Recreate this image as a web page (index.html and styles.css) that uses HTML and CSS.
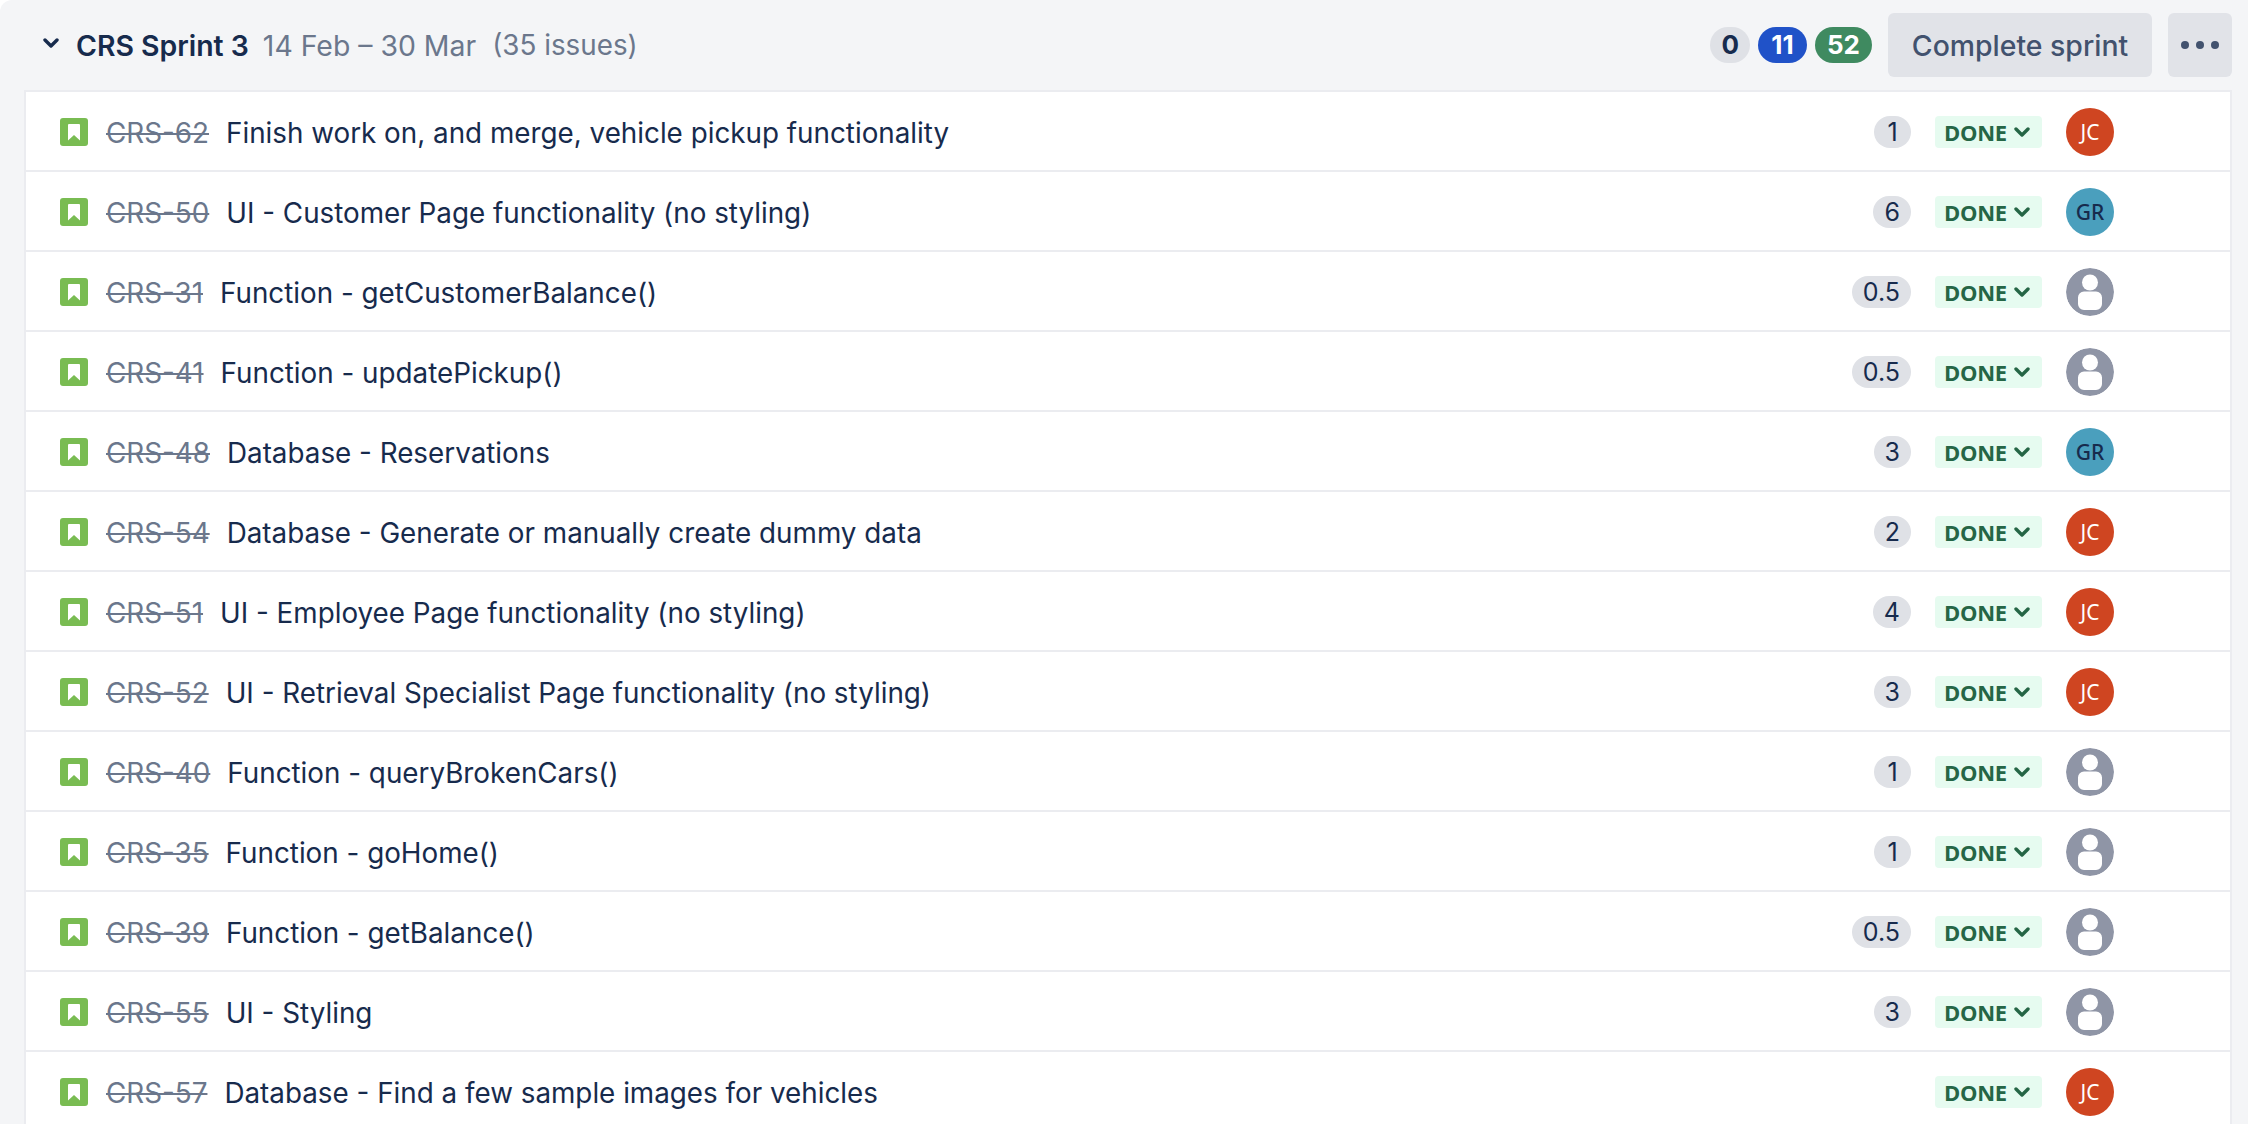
FILE: index.html

```html
<html>
<head>
<title>CRS Sprint 3</title>
<link rel="stylesheet" href="styles.css">
</head>
<body>

<svg class="defs" width="0" height="0">
  <symbol id="story" viewBox="0 0 28 28">
    <rect width="28" height="28" rx="3" fill="#79bc52"/>
    <path d="M9 6h10a1 1 0 0 1 1 1V22.500l-6-5.500-6 5.500V7a1 1 0 0 1 1-1z" fill="#fff"/>
  </symbol>
  <symbol id="caret" viewBox="0 0 16 12">
    <path d="M2 3l6 6 6-6" fill="none" stroke="currentColor" stroke-width="3.400" stroke-linecap="round" stroke-linejoin="round"/>
  </symbol>
  <symbol id="person" viewBox="0 0 48 48">
    <circle cx="24" cy="24" r="24" fill="#8f95a6"/>
    <circle cx="24" cy="14.500" r="8" fill="#fff"/>
    <path d="M18 23.500h12a6 6 0 0 1 6 6v6.500a6 6 0 0 1-6 6H18a6 6 0 0 1-6-6v-6.500a6 6 0 0 1 6-6z" fill="#fff"/>
  </symbol>
</svg>

<div class="sprint">
  <div class="sprint-head">
    <svg class="toggle"><use href="#caret"/></svg>
    <span class="sprint-name">CRS Sprint 3</span>
    <span class="sprint-meta">14 Feb – 30 Mar</span>
    <span class="sprint-count">(35 issues)</span>
    <div class="sprint-actions">
      <div class="totals">
        <span class="total total-todo">0</span>
        <span class="total total-progress">11</span>
        <span class="total total-done">52</span>
      </div>
      <button class="btn btn-complete">Complete sprint</button>
      <button class="btn btn-more"><i></i><i></i><i></i></button>
    </div>
  </div>

  <div class="issues">
    <div class="issue">
      <svg class="type"><use href="#story"/></svg>
      <span class="key">CRS-62</span>
      <span class="summary">Finish work on, and merge, vehicle pickup functionality</span>
      <span class="estimate">1</span>
      <span class="status">DONE <svg><use href="#caret"/></svg></span>
      <span class="avatar avatar-jc">JC</span>
    </div>
    <div class="issue">
      <svg class="type"><use href="#story"/></svg>
      <span class="key">CRS-50</span>
      <span class="summary">UI - Customer Page functionality (no styling)</span>
      <span class="estimate">6</span>
      <span class="status">DONE <svg><use href="#caret"/></svg></span>
      <span class="avatar avatar-gr">GR</span>
    </div>
    <div class="issue">
      <svg class="type"><use href="#story"/></svg>
      <span class="key">CRS-31</span>
      <span class="summary">Function - getCustomerBalance()</span>
      <span class="estimate">0.5</span>
      <span class="status">DONE <svg><use href="#caret"/></svg></span>
      <svg class="avatar"><use href="#person"/></svg>
    </div>
    <div class="issue">
      <svg class="type"><use href="#story"/></svg>
      <span class="key">CRS-41</span>
      <span class="summary">Function - updatePickup()</span>
      <span class="estimate">0.5</span>
      <span class="status">DONE <svg><use href="#caret"/></svg></span>
      <svg class="avatar"><use href="#person"/></svg>
    </div>
    <div class="issue">
      <svg class="type"><use href="#story"/></svg>
      <span class="key">CRS-48</span>
      <span class="summary">Database - Reservations</span>
      <span class="estimate">3</span>
      <span class="status">DONE <svg><use href="#caret"/></svg></span>
      <span class="avatar avatar-gr">GR</span>
    </div>
    <div class="issue">
      <svg class="type"><use href="#story"/></svg>
      <span class="key">CRS-54</span>
      <span class="summary">Database - Generate or manually create dummy data</span>
      <span class="estimate">2</span>
      <span class="status">DONE <svg><use href="#caret"/></svg></span>
      <span class="avatar avatar-jc">JC</span>
    </div>
    <div class="issue">
      <svg class="type"><use href="#story"/></svg>
      <span class="key">CRS-51</span>
      <span class="summary">UI - Employee Page functionality (no styling)</span>
      <span class="estimate">4</span>
      <span class="status">DONE <svg><use href="#caret"/></svg></span>
      <span class="avatar avatar-jc">JC</span>
    </div>
    <div class="issue">
      <svg class="type"><use href="#story"/></svg>
      <span class="key">CRS-52</span>
      <span class="summary">UI - Retrieval Specialist Page functionality (no styling)</span>
      <span class="estimate">3</span>
      <span class="status">DONE <svg><use href="#caret"/></svg></span>
      <span class="avatar avatar-jc">JC</span>
    </div>
    <div class="issue">
      <svg class="type"><use href="#story"/></svg>
      <span class="key">CRS-40</span>
      <span class="summary">Function - queryBrokenCars()</span>
      <span class="estimate">1</span>
      <span class="status">DONE <svg><use href="#caret"/></svg></span>
      <svg class="avatar"><use href="#person"/></svg>
    </div>
    <div class="issue">
      <svg class="type"><use href="#story"/></svg>
      <span class="key">CRS-35</span>
      <span class="summary">Function - goHome()</span>
      <span class="estimate">1</span>
      <span class="status">DONE <svg><use href="#caret"/></svg></span>
      <svg class="avatar"><use href="#person"/></svg>
    </div>
    <div class="issue">
      <svg class="type"><use href="#story"/></svg>
      <span class="key">CRS-39</span>
      <span class="summary">Function - getBalance()</span>
      <span class="estimate">0.5</span>
      <span class="status">DONE <svg><use href="#caret"/></svg></span>
      <svg class="avatar"><use href="#person"/></svg>
    </div>
    <div class="issue">
      <svg class="type"><use href="#story"/></svg>
      <span class="key">CRS-55</span>
      <span class="summary">UI - Styling</span>
      <span class="estimate">3</span>
      <span class="status">DONE <svg><use href="#caret"/></svg></span>
      <svg class="avatar"><use href="#person"/></svg>
    </div>
    <div class="issue">
      <svg class="type"><use href="#story"/></svg>
      <span class="key">CRS-57</span>
      <span class="summary">Database - Find a few sample images for vehicles</span>
      <span class="status">DONE <svg><use href="#caret"/></svg></span>
      <span class="avatar avatar-jc">JC</span>
    </div>
  </div>
</div>

</body>
</html>
```

FILE: styles.css

```css
html, body {
  margin: 0;
  height: 100%;
  overflow: hidden;
  background-color: #fff;
}

body {
  font-family: Inter, "Liberation Sans", sans-serif;
  color: #172b4d;
}

.defs {
  display: block;
}

.sprint {
  height: 1124px;
  padding: 0 16px 0 24px;
  box-sizing: border-box;
  background-color: #f4f5f7;
  border-top-left-radius: 12px;
  overflow: hidden;
}

.sprint-head {
  display: flex;
  align-items: center;
  height: 90px;
  font-size: 28.400px;
}

.toggle {
  width: 16px;
  height: 12px;
  margin: -4px 17px 0 19px;
}

.sprint-name {
  font-weight: 600;
  margin-right: 14px;
}

.sprint-meta,
.sprint-count {
  color: #6b778c;
  margin-right: 16px;
}

.sprint-count {
  font-size: 27.800px;
}

.sprint-actions {
  display: flex;
  align-items: center;
  margin-left: auto;
}

.totals {
  display: flex;
  gap: 8px;
  margin-right: 16px;
}

.total {
  height: 36px;
  line-height: 36px;
  padding: 0 12px;
  border-radius: 18px;
  text-align: center;
  font-size: 26px;
  font-weight: 700;
}

.total-todo {
  padding: 0 11px;
  background-color: #dfe1e6;
}

.total-progress {
  min-width: 25px;
  background-color: #2052c8;
  color: #fff;
}

.total-done {
  background-color: #3f8a60;
  color: #fff;
}

.btn {
  height: 64px;
  border: 0;
  border-radius: 6px;
  background-color: #e1e3e8;
  color: #42526e;
  font-family: inherit;
  font-size: 28.400px;
  font-weight: 500;
}

.btn-complete {
  width: 264px;
  padding: 0;
}

.btn-more {
  display: flex;
  align-items: center;
  justify-content: center;
  gap: 7px;
  width: 64px;
  margin-left: 16px;
  padding: 0;
}

.btn-more i {
  width: 8px;
  height: 8px;
  border-radius: 50%;
  background-color: #42526e;
}

.issues {
  border: 2px solid #ebecf0;
  border-bottom: 0;
  background-color: #fff;
}

.issue {
  display: flex;
  align-items: center;
  height: 76px;
  padding: 2px 116px 0 0;
  border-bottom: 2px solid #ebecf0;
  font-size: 27.800px;
}

.type {
  flex: none;
  width: 28px;
  height: 28px;
  margin: 0 18px 0 34px;
}

.key {
  color: #6b778c;
  text-decoration: line-through;
  margin-right: 17px;
  padding-top: 2px;
}

.summary {
  flex: 1;
  padding-top: 2px;
}

.estimate {
  min-width: 15px;
  height: 32px;
  line-height: 32px;
  padding: 0 11px;
  border-radius: 16px;
  background-color: #dfe1e6;
  text-align: center;
  font-size: 25px;
}

.status {
  display: flex;
  align-items: center;
  justify-content: space-between;
  flex: none;
  width: 107px;
  height: 32px;
  box-sizing: border-box;
  margin: 0 24px;
  padding: 0 12px 0 9px;
  border-radius: 4px;
  background-color: #e6fbf0;
  color: #256646;
  font-family: "Open Sans", sans-serif;
  font-size: 22px;
  font-weight: 700;
  letter-spacing: -0.3px;
}

.status svg {
  width: 16px;
  height: 12px;
}

.avatar {
  display: flex;
  align-items: center;
  justify-content: center;
  flex: none;
  width: 48px;
  height: 48px;
  border-radius: 50%;
  font-family: "Noto Sans", sans-serif;
  font-size: 21px;
}

.avatar-jc {
  background-color: #cf4521;
  color: #fff;
}

.avatar-gr {
  background-color: #4a9fbd;
  color: #172b4d;
  font-weight: 500;
}
```
